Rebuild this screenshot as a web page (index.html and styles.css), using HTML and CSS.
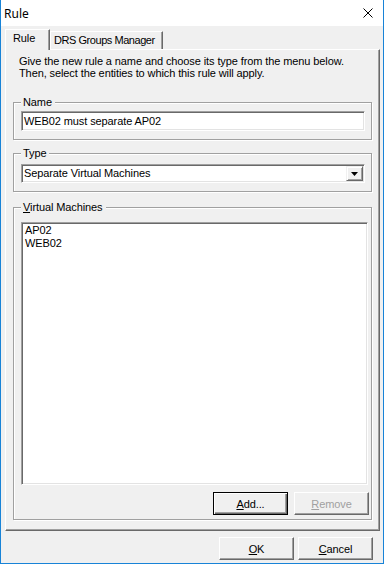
FILE: index.html
```html
<!DOCTYPE html>
<html lang="en">
<head>
<meta charset="utf-8">
<title>Rule</title>
<link rel="stylesheet" href="styles.css">
</head>
<body>
<div class="window">
  <div class="titlebar">
    <span class="title">Rule</span>
    <svg class="close" width="10" height="10" viewBox="0 0 10 10"><path d="M0.5 0.5 L9.5 9.5 M9.5 0.5 L0.5 9.5" stroke="#000" stroke-width="1" fill="none"/></svg>
  </div>
  <div class="client">
    <div class="tabs">
      <div class="tab tab-active">Rule</div>
      <div class="tab tab-drs">DRS Groups Manager</div>
    </div>
    <div class="panel">
      <p class="intro">Give the new rule a name and choose its type from the menu below.<br>Then, select the entities to which this rule will apply.</p>
      <div class="group group-name">
        <div class="legend">Name</div>
        <div class="field">WEB02 must separate AP02</div>
      </div>
      <div class="group group-type">
        <div class="legend">Type</div>
        <div class="combo">
          <span class="combo-text">Separate Virtual Machines</span>
          <span class="combo-btn"><svg width="7" height="4" viewBox="0 0 7 4"><path d="M0 0 H7 L3.5 4 Z" fill="#000"/></svg></span>
        </div>
      </div>
      <div class="group group-vms">
        <div class="legend"><u>V</u>irtual Machines</div>
        <div class="listbox">
          <div class="item">AP02</div>
          <div class="item">WEB02</div>
        </div>
        <div class="btnrow">
          <button class="btn btn-default"><u>A</u>dd...</button>
          <button class="btn" disabled><u>R</u>emove</button>
        </div>
      </div>
    </div>
    <div class="footer">
      <button class="btn"><u>O</u>K</button>
      <button class="btn"><u>C</u>ancel</button>
    </div>
  </div>
</div>
</body>
</html>
```

FILE: styles.css
```css
html, body {
  margin: 0;
  padding: 0;
  background: #fff;
}

.window {
  width: 384px;
  height: 564px;
  box-sizing: border-box;
  border-left: 1px solid #1883d7;
  border-right: 1px solid #1883d7;
  border-bottom: 1px solid #1883d7;
  background: #f0f0f0;
  display: flex;
  flex-direction: column;
  font-family: "Liberation Sans", Arial, sans-serif;
  font-size: 11px;
  letter-spacing: -0.1px;
  color: #000;
}

.titlebar {
  height: 26px;
  flex: none;
  background: #fff;
  display: flex;
  align-items: center;
  justify-content: space-between;
  padding: 0 10px 0 3px;
}

.title {
  font-family: "Noto Sans", "Open Sans", sans-serif;
  font-size: 12px;
  letter-spacing: 0;
}

.close {
  display: block;
}

.client {
  flex: 1;
  display: flex;
  flex-direction: column;
  padding: 3px 3px 3px 4px;
  min-height: 0;
}

.tabs {
  height: 20px;
  display: flex;
  align-items: flex-end;
  flex: none;
}

.tab {
  box-sizing: border-box;
  border-top: 1px solid #fff;
  border-left: 1px solid #fff;
  border-right: 1px solid #696969;
  box-shadow: inset -1px 0 0 #a0a0a0;
  line-height: 13px;
  white-space: nowrap;
  background: #f0f0f0;
}

.tab-active {
  position: relative;
  z-index: 1;
  width: 45px;
  height: 21px;
  margin-bottom: -1px;
  padding: 2px 0 0 7px;
}

.tab-drs {
  width: 113px;
  height: 18px;
  padding: 2px 0 0 3px;
  letter-spacing: -0.45px;
}

.panel {
  flex: 1;
  display: flex;
  flex-direction: column;
  border-top: 1px solid #fff;
  border-left: 1px solid #fff;
  border-right: 1px solid #696969;
  border-bottom: 1px solid #696969;
  box-shadow: inset -1px -1px 0 #a0a0a0;
  padding: 0 0 10px 0;
  min-height: 0;
}

.intro {
  margin: 5px 0 0 13px;
  line-height: 12px;
}

.group {
  border: 1px solid #a0a0a0;
  box-shadow: inset 1px 1px 0 #fff, 1px 1px 0 #fff;
  margin: 0 7px;
  display: flex;
  flex-direction: column;
}

.group-name {
  margin-top: 23px;
}

.group-type {
  margin-top: 13px;
}

.group-vms {
  margin-top: 15px;
  flex: 1;
  min-height: 0;
}

.legend {
  align-self: flex-start;
  margin: -7px 0 0 7px;
  padding: 0 3px 0 2px;
  line-height: 13px;
  background: #f0f0f0;
}

.field {
  box-sizing: border-box;
  height: 20px;
  margin: 2px 6px 8px 7px;
  padding: 0 0 0 2px;
  background: #fff;
  border: 1px solid;
  border-color: #a0a0a0 #fff #fff #a0a0a0;
  box-shadow: inset 1px 1px 0 #696969, inset -1px -1px 0 #e3e3e3;
  line-height: 18px;
  white-space: nowrap;
}

.combo {
  box-sizing: border-box;
  height: 19px;
  margin: 4px 6px 8px 7px;
  padding: 1px;
  background: #fff;
  border: 1px solid;
  border-color: #a0a0a0 #fff #fff #a0a0a0;
  box-shadow: inset 1px 1px 0 #696969, inset -1px -1px 0 #e3e3e3;
  display: flex;
  align-items: center;
}

.combo-text {
  flex: 1;
  padding-left: 1px;
  line-height: 15px;
  white-space: nowrap;
}

.combo-btn {
  box-sizing: border-box;
  width: 17px;
  height: 15px;
  background: #f0f0f0;
  border: 1px solid;
  border-color: #f0f0f0 #696969 #696969 #f0f0f0;
  box-shadow: inset 1px 1px 0 #fff, inset -1px -1px 0 #a0a0a0;
  display: flex;
  align-items: center;
  justify-content: center;
}

.combo-btn svg {
  display: block;
}

.listbox {
  flex: 1;
  min-height: 0;
  box-sizing: border-box;
  margin: 8px 3px 0 7px;
  padding: 1px;
  background: #fff;
  border: 1px solid;
  border-color: #a0a0a0 #fff #fff #a0a0a0;
  box-shadow: inset 1px 1px 0 #696969, inset -1px -1px 0 #e3e3e3;
}

.item {
  line-height: 13px;
  padding-left: 2px;
}

.btnrow {
  display: flex;
  justify-content: flex-end;
  gap: 6px;
  margin: 7px 2px 4px 0;
}

.btn {
  box-sizing: border-box;
  width: 75px;
  height: 23px;
  padding: 0;
  margin: 0;
  font-family: "Liberation Sans", Arial, sans-serif;
  font-size: 11px;
  letter-spacing: -0.1px;
  color: #000;
  background: #f0f0f0;
  border: 1px solid;
  border-color: #fff #696969 #696969 #fff;
  box-shadow: inset -1px -1px 0 #a0a0a0;
  border-radius: 0;
}

.btn-default {
  border-color: #000;
  box-shadow: inset 1px 1px 0 #fff, inset -1px -1px 0 #696969, inset -2px -2px 0 #a0a0a0;
}

.btn:disabled {
  color: #a0a0a0;
}

.footer {
  flex: none;
  display: flex;
  justify-content: flex-end;
  gap: 4px;
  margin-top: 6px;
  padding-right: 7px;
}
```
